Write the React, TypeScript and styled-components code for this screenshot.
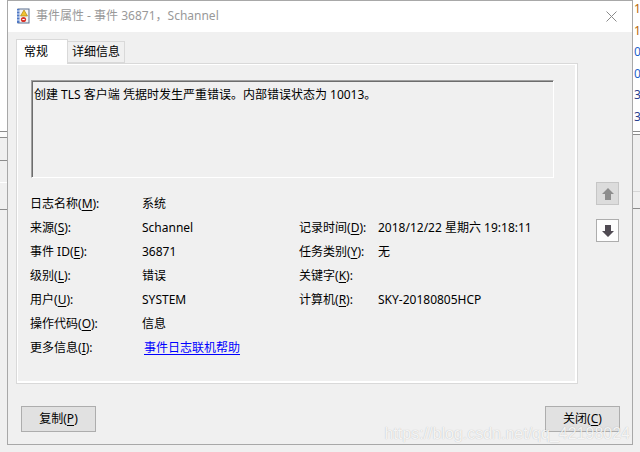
import React from 'react';
import styled, { createGlobalStyle } from 'styled-components';

const GlobalStyle = createGlobalStyle`
  html, body {
    margin: 0;
    padding: 0;
    background: #fff;
    overflow: hidden;
  }
  body {
    font-family: "Noto Sans", "Noto Sans CJK SC", sans-serif;
    font-size: 12px;
    color: #000;
  }
`;

type Field = { label: string; key: string; value: string; link?: boolean };

const leftFields: Field[] = [
  { label: '日志名称', key: 'M', value: '系统' },
  { label: '来源', key: 'S', value: 'Schannel' },
  { label: '事件 ID', key: 'E', value: '36871' },
  { label: '级别', key: 'L', value: '错误' },
  { label: '用户', key: 'U', value: 'SYSTEM' },
  { label: '操作代码', key: 'O', value: '信息' },
  { label: '更多信息', key: 'I', value: '事件日志联机帮助', link: true },
];

const rightFields: (Field | null)[] = [
  null,
  { label: '记录时间', key: 'D', value: '2018/12/22 星期六 19:18:11' },
  { label: '任务类别', key: 'Y', value: '无' },
  { label: '关键字', key: 'K', value: '' },
  { label: '计算机', key: 'R', value: 'SKY-20180805HCP' },
  null,
  null,
];

const behindDigits = [
  { d: '1', c: '#b8690a' },
  { d: '1', c: '#b8690a' },
  { d: '0', c: '#1f5fc8' },
  { d: '0', c: '#1f5fc8' },
  { d: '3', c: '#2a3f8f' },
  { d: '3', c: '#2a3f8f' },
];

const Label = ({ text, k }: { text: string; k: string }) => (
  <LabelText>
    {text}(<u>{k}</u>):
  </LabelText>
);

const FieldValue = ({ field }: { field: Field | null }) => {
  if (!field) return <Value />;
  if (field.link) return <Value><Link href="#">{field.value}</Link></Value>;
  return <Value>{field.value}</Value>;
};

const EventIcon = () => (
  <svg width="14" height="16" viewBox="0 0 14 16">
    <rect x="2" y="1" width="11" height="14" fill="#f4f4f4" stroke="#5b6f8e" />
    <rect x="1" y="1" width="2.5" height="14" fill="#4f78c4" />
    <path d="M1 3h3M1 6h3M1 9h3M1 12h3" stroke="#dfe8f8" strokeWidth="1" />
    <path d="M8 2 L11.5 8 L4.5 8 Z" fill="#f1c232" stroke="#a37800" strokeWidth="0.6" />
    <circle cx="7.5" cy="11.5" r="2.6" fill="#d9342b" />
    <rect x="6.3" y="11" width="2.4" height="1" fill="#fff" />
  </svg>
);

const ArrowIcon = ({ down, fill }: { down?: boolean; fill: string }) => (
  <svg width="14" height="14" viewBox="0 0 14 14">
    <polygon
      points="7,1 13,7 10,7 10,13 4,13 4,7 1,7"
      fill={fill}
      transform={down ? 'rotate(180 7 7)' : undefined}
    />
  </svg>
);

const App: React.FC = () => (
  <>
    <GlobalStyle />
    <Desktop>
      <LeftStrip>
        <Seg $h={131} $bg="#ffffff" />
        <Seg $h={1} $bg="#8c8c8c" />
        <Seg $h={5} $bg="#fbfbfb" />
        <Seg $h={1} $bg="#8c8c8c" />
        <Seg $h={22} $bg="#f0f0f0" />
        <Seg $h={1} $bg="#8c8c8c" />
        <Seg $h={21} $bg="#f0f0f0" />
        <Seg $h={1} $bg="#ffffff" />
        <Seg $h={26} $bg="#f0f0f0" />
        <Seg $h={1} $bg="#8c8c8c" />
        <Seg $h={242} $bg="#f0f0f0" />
      </LeftStrip>

      <Window>
        <TitleBar>
          <EventIcon />
          <TitleText>事件属性 - 事件 36871，Schannel</TitleText>
          <CloseButton aria-label="关闭">
            <svg width="11" height="11" viewBox="0 0 11 11">
              <path d="M0.5 0.5 L10.5 10.5 M10.5 0.5 L0.5 10.5" stroke="#8a8a8a" strokeWidth="1" />
            </svg>
          </CloseButton>
        </TitleBar>

        <Body>
          <TabStrip>
            <Tab $active>常规</Tab>
            <Tab>详细信息</Tab>
          </TabStrip>

          <MainRow>
            <Panel>
              <MessageBox>创建 TLS 客户端 凭据时发生严重错误。内部错误状态为 10013。</MessageBox>
              <FieldGrid>
                {leftFields.map((f, i) => {
                  const r = rightFields[i];
                  return (
                    <React.Fragment key={f.key}>
                      <Label text={f.label} k={f.key} />
                      <FieldValue field={f} />
                      {r ? <Label text={r.label} k={r.key} /> : <span />}
                      <FieldValue field={r} />
                    </React.Fragment>
                  );
                })}
              </FieldGrid>
            </Panel>

            <SideColumn>
              <ArrowButton $disabled>
                <ArrowIcon fill="#8d8d8d" />
              </ArrowButton>
              <ArrowButton>
                <ArrowIcon down fill="#4f4a52" />
              </ArrowButton>
            </SideColumn>
          </MainRow>

          <ButtonRow>
            <DialogButton>
              复制(<u>P</u>)
            </DialogButton>
            <DialogButton>
              关闭(<u>C</u>)
            </DialogButton>
          </ButtonRow>
        </Body>

        <Watermark>https://blog.csdn.net/qq_42198024</Watermark>
      </Window>

      <RightStrip>
        <DigitColumn>
          {behindDigits.map((d, i) => (
            <Digit key={i} $color={d.c}>
              {d.d}
            </Digit>
          ))}
        </DigitColumn>
        <Seg $h={1} $bg="#8c8c8c" />
        <Seg $h={2} $bg="#ffffff" />
        <Seg $h={1} $bg="#8c8c8c" />
        <Seg $h={56} $bg="#f0f0f0" />
        <Seg $h={1} $bg="#d6d6d6" />
        <Seg $h={16} $bg="#f0f0f0" />
        <Seg $h={1} $bg="#8c8c8c" />
        <Seg $h={243} $bg="#f0f0f0" />
      </RightStrip>
    </Desktop>
  </>
);

// styled components
const Desktop = styled.div`
  display: grid;
  grid-template-columns: 7px 626px 7px;
  width: 640px;
  height: 452px;
  background: #f0f0f0;
  overflow: hidden;
`;

const LeftStrip = styled.div`
  display: flex;
  flex-direction: column;
  overflow: hidden;
`;

const RightStrip = styled.div`
  display: flex;
  flex-direction: column;
  overflow: hidden;
`;

const Seg = styled.div<{ $h: number; $bg: string }>`
  flex: none;
  height: ${({ $h }) => $h}px;
  background: ${({ $bg }) => $bg};
`;

const DigitColumn = styled.div`
  flex: none;
  height: 131px;
  background: #fff;
  padding-left: 1px;
  box-sizing: border-box;
  overflow: hidden;
  display: flex;
  flex-direction: column;
`;

const Digit = styled.div<{ $color: string }>`
  flex: none;
  height: 21.6px;
  line-height: 17px;
  font-size: 12px;
  color: ${({ $color }) => $color};
`;

const Window = styled.div`
  position: relative;
  display: flex;
  flex-direction: column;
  height: 445px;
  box-sizing: border-box;
  border: 1px solid #a8a8a8;
  background: #f0f0f0;
`;

const TitleBar = styled.div`
  display: flex;
  align-items: center;
  height: 31px;
  padding-left: 8px;
  padding-bottom: 1px;
  box-sizing: border-box;
  background: #fff;
  flex: none;

  svg {
    flex: none;
  }
`;

const TitleText = styled.span`
  margin-left: 6px;
  color: #999;
  font-size: 12px;
  line-height: 16px;
  flex: 1;
`;

const CloseButton = styled.div`
  display: flex;
  align-items: center;
  justify-content: center;
  width: 46px;
  height: 30px;
  margin-right: -2px;
`;

const Body = styled.div`
  display: flex;
  flex-direction: column;
  padding: 7px 12px 0 8px;
  flex: 1;
`;

const TabStrip = styled.div`
  display: flex;
  align-items: flex-end;
  height: 24px;
  position: relative;
  z-index: 1;
`;

const Tab = styled.div<{ $active?: boolean }>`
  box-sizing: border-box;
  height: ${({ $active }) => ($active ? 25 : 22)}px;
  padding: 0 ${({ $active }) => ($active ? 7 : 4)}px;
  margin-bottom: ${({ $active }) => ($active ? -1 : 0)}px;
  border: 1px solid #d9d9d9;
  border-bottom: ${({ $active }) => ($active ? 'none' : '1px solid #d9d9d9')};
  background: ${({ $active }) => ($active ? '#fff' : '#f0f0f0')};
  line-height: ${({ $active }) => ($active ? 24 : 20)}px;
  font-size: 12px;
  width: ${({ $active }) => ($active ? 52 : 58)}px;
  margin-left: ${({ $active }) => ($active ? 0 : -1)}px;
  text-align: ${({ $active }) => ($active ? 'left' : 'center')};
`;

const MainRow = styled.div`
  display: flex;
  align-items: flex-start;
`;

const Panel = styled.div`
  box-sizing: border-box;
  width: 562px;
  height: 321px;
  border: 1px solid #d9d9d9;
  box-shadow: inset 1px 1px 0 #fff, inset -2px -2px 0 #fff;
  background: #f0f0f0;
  padding: 16px 0 0 14px;
`;

const MessageBox = styled.div`
  box-sizing: border-box;
  width: 523px;
  height: 98px;
  border: 1px solid;
  border-color: #a0a0a0 #fff #fff #a0a0a0;
  box-shadow: inset 1px 1px 0 #6d6d6d;
  padding: 6px 2px;
  line-height: 16px;
  font-size: 12px;
  background: #f0f0f0;
`;

const FieldGrid = styled.div`
  display: grid;
  grid-template-columns: 112px 157px 79px 1fr;
  grid-auto-rows: 24px;
  align-items: center;
  margin-top: 14px;
  margin-left: -1px;
`;

const LabelText = styled.span`
  line-height: 16px;
  white-space: nowrap;

  u {
    text-underline-offset: 2px;
  }
`;

const Value = styled.span`
  line-height: 16px;
  white-space: nowrap;
`;

const Link = styled.a`
  margin-left: 2px;
  color: #0000ff;
  text-decoration: underline;
  text-underline-offset: 2px;
`;

const SideColumn = styled.div`
  display: flex;
  flex-direction: column;
  gap: 14px;
  margin-left: 18px;
  padding-top: 119px;
`;

const ArrowButton = styled.div<{ $disabled?: boolean }>`
  box-sizing: border-box;
  width: 23px;
  height: 23px;
  display: flex;
  align-items: center;
  justify-content: center;
  border: 1px solid ${({ $disabled }) => ($disabled ? '#c6c6c6' : '#adadad')};
  background: ${({ $disabled }) => ($disabled ? '#dcdcdc' : '#fdfdfd')};
`;

const ButtonRow = styled.div`
  display: flex;
  justify-content: space-between;
  padding-left: 5px;
  margin-top: 22px;
`;

const DialogButton = styled.div`
  box-sizing: border-box;
  width: 75px;
  height: 26px;
  border: 1px solid #adadad;
  background: #e1e1e1;
  display: flex;
  align-items: center;
  justify-content: center;
  font-size: 12px;
  line-height: 16px;

  u {
    text-underline-offset: 2px;
  }
`;

const Watermark = styled.div`
  position: absolute;
  right: 2px;
  bottom: 1px;
  font-family: "Liberation Sans", Arial, sans-serif;
  font-size: 16px;
  color: rgba(255, 255, 255, 0.85);
  text-shadow: 0 0 1px rgba(0, 0, 0, 0.25);
  pointer-events: none;
  white-space: nowrap;
`;

export default App;
